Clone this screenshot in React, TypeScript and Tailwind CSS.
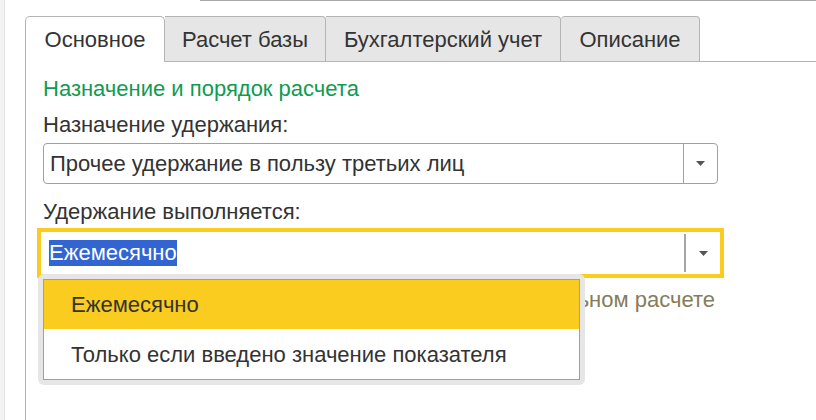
import React from "react";

const font = { fontFamily: '"Liberation Sans", Arial, sans-serif' };

function Arrow() {
  return (
    <svg width="9" height="5" viewBox="0 0 9 5">
      <path d="M0 0 H9 L4.5 5 Z" fill="#555555" />
    </svg>
  );
}

export default function App() {
  return (
    <div
      className="relative w-[816px] h-[420px] overflow-hidden bg-white flex text-[22px] text-[#333333]"
      style={font}
    >
      {/* left strip */}
      <div className="w-[5px] h-full bg-[#f3f3f3] border-r border-[#e3e3e3]" />
      <div className="w-[20px]" />
      {/* main */}
      <div className="flex-1 flex flex-col">
        <div className="h-px ml-[175px] bg-[#a8a8a8]" />
        <div className="h-[15px]" />
        {/* tabs */}
        <div className="flex items-end h-[46px]">
          <div className="w-[140px] h-[46px] bg-white border border-b-0 border-[#b4b4b4] rounded-t-[5px] flex items-center justify-center">
            Основное
          </div>
          <div className="w-[161px] h-[46px] bg-[#e6e6e6] border-t border-r border-b border-[#b4b4b4] rounded-tr-[4px] flex items-center justify-center">
            Расчет базы
          </div>
          <div className="w-[235px] h-[46px] bg-[#e6e6e6] border-t border-r border-b border-[#b4b4b4] rounded-tr-[4px] flex items-center justify-center">
            Бухгалтерский учет
          </div>
          <div className="w-[139px] h-[46px] bg-[#e6e6e6] border-t border-r border-b border-[#b4b4b4] rounded-t-[4px] flex items-center justify-center">
            Описание
          </div>
          <div className="flex-1 h-[46px] border-b border-[#b4b4b4]" />
        </div>
        {/* panel */}
        <div className="flex-1 border-l border-[#b4b4b4] pl-[17px] pt-[15px] flex flex-col">
          <div className="leading-[24px] text-[#0e9b52]">Назначение и порядок расчета</div>
          <div className="leading-[24px] mt-[12px]">Назначение удержания:</div>
          <div className="mt-[6px] w-[675px] h-[41px] border border-[#a0a0a0] rounded-[4px] flex">
            <div className="flex-1 flex items-center pl-[6px]">Прочее удержание в пользу третьих лиц</div>
            <div className="w-[34px] border-l border-[#a0a0a0] flex items-center justify-center">
              <Arrow />
            </div>
          </div>
          <div className="leading-[24px] mt-[16px]">Удержание выполняется:</div>
          <div className="mt-[4px] -ml-[6px] w-[687px] h-[50px] border-4 border-[#f9cc1f] flex">
            <div className="flex-1 flex items-center pl-[8px]">
              <span className="inline-block h-[26px] leading-[26px] bg-[#3264d2] text-white">Ежемесячно</span>
            </div>
            <div className="w-[2px] my-[2px] bg-[#a6a6a6]" />
            <div className="w-[34px] flex items-center justify-center">
              <Arrow />
            </div>
          </div>
          <div className="mt-[10px] w-[672px] text-right leading-[24px] text-[#857d5b]">
            Учитывать при окончательном расчете
          </div>
        </div>
      </div>

      {/* dropdown popup */}
      <div className="absolute left-[38px] top-[274px] w-[547px] h-[111px] bg-[#e6e6e6] rounded-[6px] p-[5px]">
        <div className="w-full h-full bg-white border border-[#a0a0a0] flex flex-col">
          <div className="h-[49px] bg-[#f9cc1f] flex items-center pl-[27px]">Ежемесячно</div>
          <div className="flex-1 flex items-center pl-[27px]">Только если введено значение показателя</div>
        </div>
      </div>
    </div>
  );
}
